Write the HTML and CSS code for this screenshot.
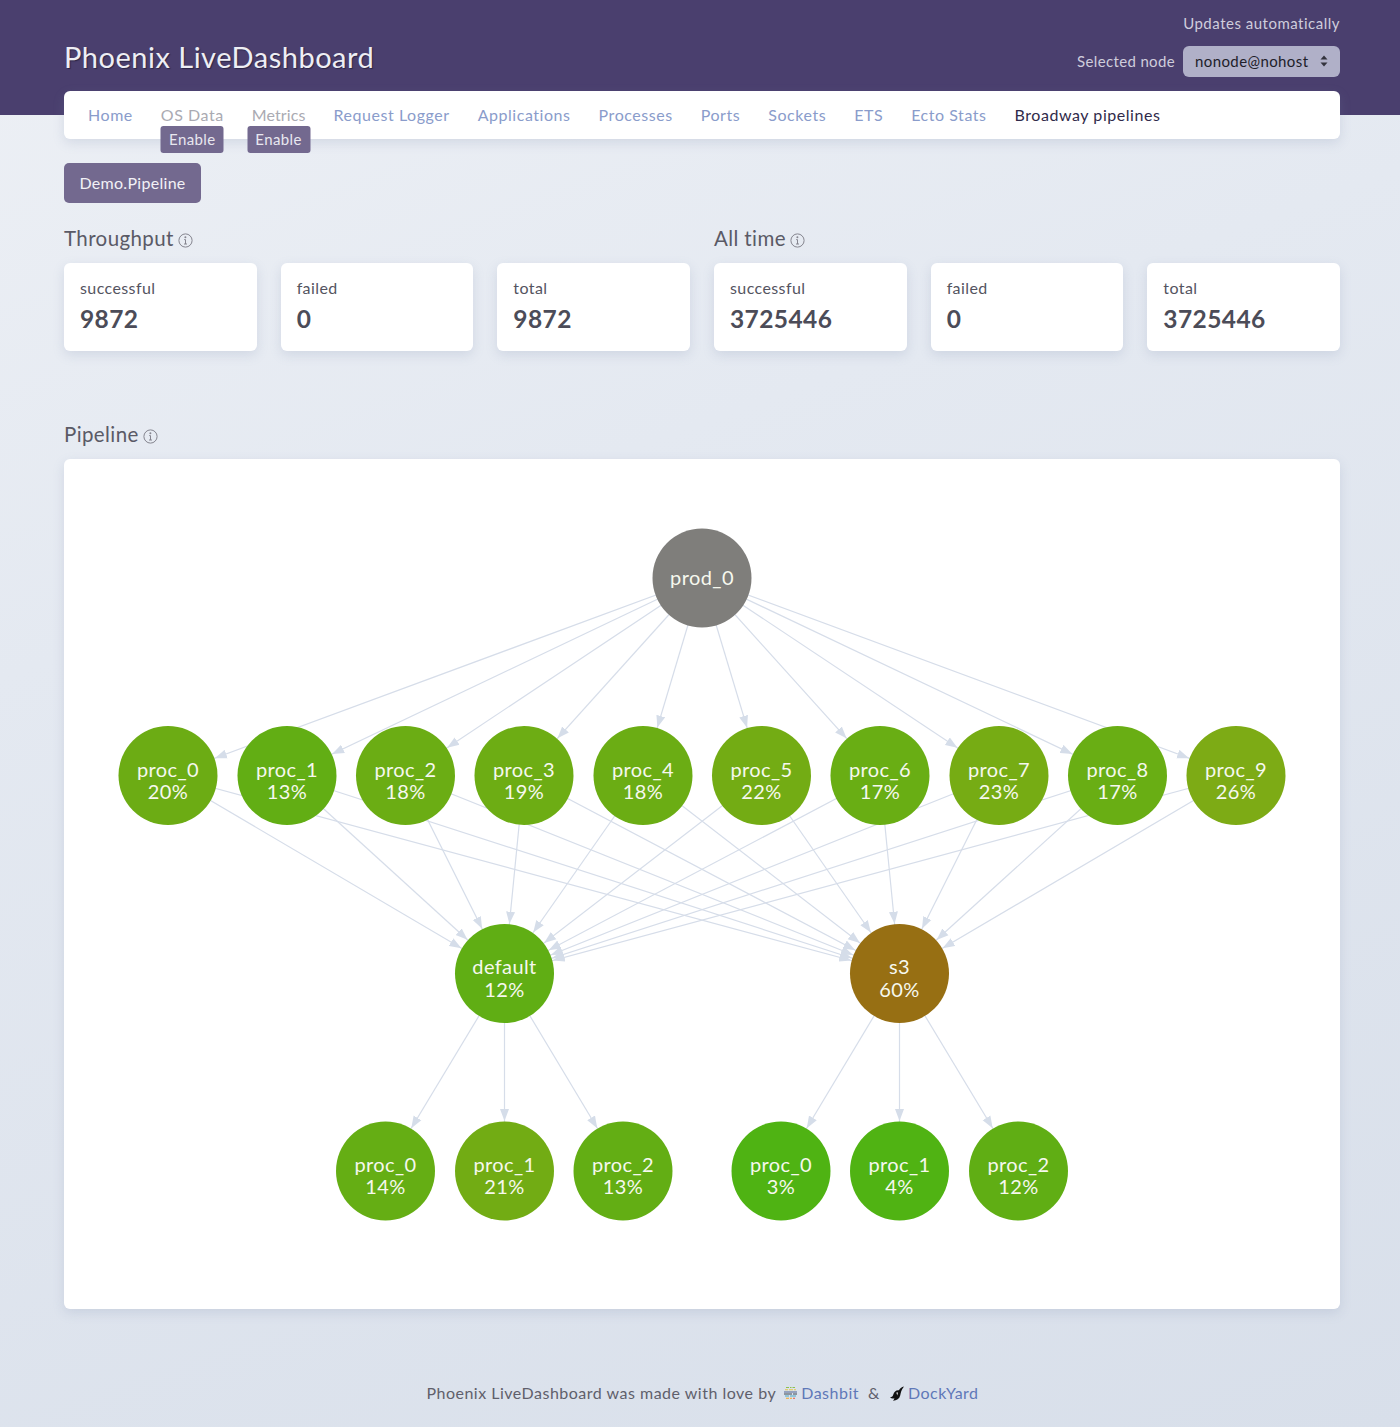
FILE: index.html
```html
<!DOCTYPE html>
<html>
<head>
    <title>Phoenix LiveDashboard</title>
    <link rel="stylesheet" href="styles.css">
</head>
<body>
    <header class="topbar">
        <h1 class="brand">Phoenix LiveDashboard</h1>
        <div class="topbar-right">
            <div class="refresh-note">Updates automatically</div>
            <form class="node-form">
                <label for="node-select">Selected node</label>
                <div class="select-wrap">
                    <select id="node-select"><option>nonode@nohost</option></select>
                    <svg class="select-caret" width="8" height="12" viewBox="0 0 8 12"><path d="M4 0.5 L7.5 4.5 H0.5 Z M4 11.5 L7.5 7.5 H0.5 Z"/></svg>
                </div>
            </form>
        </div>
    </header>

    <nav class="nav-card">
        <a href="#" class="nav-link">Home</a>
        <span class="nav-link nav-disabled">OS Data<a href="#" class="enable-badge">Enable</a></span>
        <span class="nav-link nav-disabled nav-metrics">Metrics<a href="#" class="enable-badge">Enable</a></span>
        <a href="#" class="nav-link">Request Logger</a>
        <a href="#" class="nav-link">Applications</a>
        <a href="#" class="nav-link">Processes</a>
        <a href="#" class="nav-link">Ports</a>
        <a href="#" class="nav-link">Sockets</a>
        <a href="#" class="nav-link">ETS</a>
        <a href="#" class="nav-link">Ecto Stats</a>
        <a href="#" class="nav-link nav-active">Broadway pipelines</a>
    </nav>

    <main class="content">
        <a href="#" class="pipeline-button">Demo.Pipeline</a>

        <section class="stats-grid">
            <h2 class="section-title stats-title-left">Throughput
                <svg class="info-icon" width="15" height="15" viewBox="0 0 15 15"><circle cx="7.5" cy="7.5" r="6.6"/><path d="M7.5 6.6 V11 M6 11 H9 M6.2 6.6 H7.5"/><circle class="info-dot" cx="7.4" cy="4.3" r="1"/></svg>
            </h2>
            <h2 class="section-title stats-title-right">All time
                <svg class="info-icon" width="15" height="15" viewBox="0 0 15 15"><circle cx="7.5" cy="7.5" r="6.6"/><path d="M7.5 6.6 V11 M6 11 H9 M6.2 6.6 H7.5"/><circle class="info-dot" cx="7.4" cy="4.3" r="1"/></svg>
            </h2>
            <div class="stat-card"><div class="stat-label">successful</div><div class="stat-value">9872</div></div>
            <div class="stat-card"><div class="stat-label">failed</div><div class="stat-value">0</div></div>
            <div class="stat-card"><div class="stat-label">total</div><div class="stat-value">9872</div></div>
            <div class="stat-card"><div class="stat-label">successful</div><div class="stat-value">3725446</div></div>
            <div class="stat-card"><div class="stat-label">failed</div><div class="stat-value">0</div></div>
            <div class="stat-card"><div class="stat-label">total</div><div class="stat-value">3725446</div></div>
        </section>

        <h2 class="section-title pipeline-title">Pipeline
            <svg class="info-icon" width="15" height="15" viewBox="0 0 15 15"><circle cx="7.5" cy="7.5" r="6.6"/><path d="M7.5 6.6 V11 M6 11 H9 M6.2 6.6 H7.5"/><circle class="info-dot" cx="7.4" cy="4.3" r="1"/></svg>
        </h2>

        <div class="graph-card">
            <svg class="graph" width="1276" height="850" viewBox="64 459 1276 850">
                <defs>
                    <marker id="arrow" markerUnits="userSpaceOnUse" markerWidth="12" markerHeight="10" refX="62" refY="5" orient="auto">
                        <path class="arrow-head" d="M0 0.5 L12 5 L0 9.5 Z"/>
                    </marker>
                </defs>

                <g class="edges" marker-end="url(#arrow)">
                    <line x1="702" y1="578" x2="168" y2="775.5"/>
                    <line x1="702" y1="578" x2="287" y2="775.5"/>
                    <line x1="702" y1="578" x2="405.5" y2="775.5"/>
                    <line x1="702" y1="578" x2="524" y2="775.5"/>
                    <line x1="702" y1="578" x2="643" y2="775.5"/>
                    <line x1="702" y1="578" x2="761.5" y2="775.5"/>
                    <line x1="702" y1="578" x2="880" y2="775.5"/>
                    <line x1="702" y1="578" x2="999" y2="775.5"/>
                    <line x1="702" y1="578" x2="1117.5" y2="775.5"/>
                    <line x1="702" y1="578" x2="1236" y2="775.5"/>

                    <line x1="168" y1="775.5" x2="504.5" y2="973.5"/>
                    <line x1="287" y1="775.5" x2="504.5" y2="973.5"/>
                    <line x1="405.5" y1="775.5" x2="504.5" y2="973.5"/>
                    <line x1="524" y1="775.5" x2="504.5" y2="973.5"/>
                    <line x1="643" y1="775.5" x2="504.5" y2="973.5"/>
                    <line x1="761.5" y1="775.5" x2="504.5" y2="973.5"/>
                    <line x1="880" y1="775.5" x2="504.5" y2="973.5"/>
                    <line x1="999" y1="775.5" x2="504.5" y2="973.5"/>
                    <line x1="1117.5" y1="775.5" x2="504.5" y2="973.5"/>
                    <line x1="1236" y1="775.5" x2="504.5" y2="973.5"/>

                    <line x1="168" y1="775.5" x2="899.5" y2="973.5"/>
                    <line x1="287" y1="775.5" x2="899.5" y2="973.5"/>
                    <line x1="405.5" y1="775.5" x2="899.5" y2="973.5"/>
                    <line x1="524" y1="775.5" x2="899.5" y2="973.5"/>
                    <line x1="643" y1="775.5" x2="899.5" y2="973.5"/>
                    <line x1="761.5" y1="775.5" x2="899.5" y2="973.5"/>
                    <line x1="880" y1="775.5" x2="899.5" y2="973.5"/>
                    <line x1="999" y1="775.5" x2="899.5" y2="973.5"/>
                    <line x1="1117.5" y1="775.5" x2="899.5" y2="973.5"/>
                    <line x1="1236" y1="775.5" x2="899.5" y2="973.5"/>

                    <line x1="504.5" y1="973.5" x2="385.5" y2="1171"/>
                    <line x1="504.5" y1="973.5" x2="504.5" y2="1171"/>
                    <line x1="504.5" y1="973.5" x2="623" y2="1171"/>
                    <line x1="899.5" y1="973.5" x2="781" y2="1171"/>
                    <line x1="899.5" y1="973.5" x2="899.5" y2="1171"/>
                    <line x1="899.5" y1="973.5" x2="1018.5" y2="1171"/>
                </g>

                <g class="nodes">
                    <circle cx="702" cy="578" r="49.5" fill="#7f7e7b"/>
                    <text x="702" y="584.5">prod_0</text>

                    <circle cx="168" cy="775.5" r="49.5" fill="#6cac14"/>
                    <text x="168" y="776.5">proc_0<tspan x="168" dy="22">20%</tspan></text>
                    <circle cx="287" cy="775.5" r="49.5" fill="#62ae14"/>
                    <text x="287" y="776.5">proc_1<tspan x="287" dy="22">13%</tspan></text>
                    <circle cx="405.5" cy="775.5" r="49.5" fill="#6bad14"/>
                    <text x="405.5" y="776.5">proc_2<tspan x="405.5" dy="22">18%</tspan></text>
                    <circle cx="524" cy="775.5" r="49.5" fill="#6dad14"/>
                    <text x="524" y="776.5">proc_3<tspan x="524" dy="22">19%</tspan></text>
                    <circle cx="643" cy="775.5" r="49.5" fill="#6bad14"/>
                    <text x="643" y="776.5">proc_4<tspan x="643" dy="22">18%</tspan></text>
                    <circle cx="761.5" cy="775.5" r="49.5" fill="#73ac14"/>
                    <text x="761.5" y="776.5">proc_5<tspan x="761.5" dy="22">22%</tspan></text>
                    <circle cx="880" cy="775.5" r="49.5" fill="#69ae14"/>
                    <text x="880" y="776.5">proc_6<tspan x="880" dy="22">17%</tspan></text>
                    <circle cx="999" cy="775.5" r="49.5" fill="#76ac14"/>
                    <text x="999" y="776.5">proc_7<tspan x="999" dy="22">23%</tspan></text>
                    <circle cx="1117.5" cy="775.5" r="49.5" fill="#69ae14"/>
                    <text x="1117.5" y="776.5">proc_8<tspan x="1117.5" dy="22">17%</tspan></text>
                    <circle cx="1236" cy="775.5" r="49.5" fill="#7dab15"/>
                    <text x="1236" y="776.5">proc_9<tspan x="1236" dy="22">26%</tspan></text>

                    <circle cx="504.5" cy="973.5" r="49.5" fill="#60ae14"/>
                    <text x="504.5" y="973.5">default<tspan x="504.5" dy="23">12%</tspan></text>
                    <circle cx="899.5" cy="973.5" r="49.5" fill="#976f13"/>
                    <text x="899.5" y="973.5">s3<tspan x="899.5" dy="23">60%</tspan></text>

                    <circle cx="385.5" cy="1171" r="49.5" fill="#65ae14"/>
                    <text x="385.5" y="1171.5">proc_0<tspan x="385.5" dy="22">14%</tspan></text>
                    <circle cx="504.5" cy="1171" r="49.5" fill="#72ac14"/>
                    <text x="504.5" y="1171.5">proc_1<tspan x="504.5" dy="22">21%</tspan></text>
                    <circle cx="623" cy="1171" r="49.5" fill="#63ae14"/>
                    <text x="623" y="1171.5">proc_2<tspan x="623" dy="22">13%</tspan></text>
                    <circle cx="781" cy="1171" r="49.5" fill="#4fb313"/>
                    <text x="781" y="1171.5">proc_0<tspan x="781" dy="22">3%</tspan></text>
                    <circle cx="899.5" cy="1171" r="49.5" fill="#50b313"/>
                    <text x="899.5" y="1171.5">proc_1<tspan x="899.5" dy="22">4%</tspan></text>
                    <circle cx="1018.5" cy="1171" r="49.5" fill="#60ae14"/>
                    <text x="1018.5" y="1171.5">proc_2<tspan x="1018.5" dy="22">12%</tspan></text>
                </g>
            </svg>
        </div>
    </main>

    <footer class="footer">
        <span>Phoenix LiveDashboard was made with love by</span>
        <a href="#" class="footer-link">
            <svg class="footer-logo" width="15" height="14" viewBox="0 0 15 14">
                <path stroke="#8cc152" d="M3 1.5 H6 M7 1.5 H8.5 M9.5 1.5 H12"/>
                <path stroke="#e6c84a" d="M2 3.8 H5 M6 3.8 H10 M11 3.8 H13"/>
                <path stroke="#5b6f9c" d="M1 6 H14"/>
                <path stroke="#434a54" d="M1 8 H9 M10 8 H14"/>
                <path stroke="#48a9c5" d="M2 10 H6 M7 10 H13"/>
                <path stroke="#f6a623" d="M3 12.2 H6 M7 12.2 H9"/>
                <path stroke="#e9573f" d="M10 12.2 H12"/>
            </svg>Dashbit</a>
        <span class="footer-amp">&amp;</span>
        <a href="#" class="footer-link">
            <svg class="footer-logo" width="16" height="15" viewBox="0 0 16 15">
                <path fill="#111" d="M15 0.5 C12.5 1 10.8 2.6 10 4.2 C7.2 3.8 5 5.6 4.4 8.2 C4 10 3 11 1 11.4 C2.4 12.6 4 12.8 5.4 12.2 C5.2 13 4.8 14 4 14.8 C7.8 14.8 10.4 12.8 11.2 9.6 C11.8 7.2 12.2 3.6 15 0.5 Z"/>
                <path fill="#fff" d="M7.4 6.6 L9 6.4 L8.2 9.4 Z"/>
            </svg>DockYard</a>
    </footer>
</body>
</html>
```

FILE: styles.css
```css
* {
    box-sizing: border-box;
}
html, body {
    margin: 0;
}
body {
    font-family: Lato, "Open Sans", sans-serif;
    font-size: 16px;
    letter-spacing: 0.4px;
    color: #54545f;
    background: linear-gradient(160deg, #edf0f5 0%, #e4e9f1 35%, #d8dfea 100%);
    height: 1427px;
}
a {
    text-decoration: none;
}

.topbar {
    height: 115px;
    background: #4a3f6e;
    padding: 0 60px 0 64px;
    display: flex;
    justify-content: space-between;
    align-items: flex-start;
}
.brand {
    margin: 38px 0 0;
    font-size: 29px;
    line-height: 38px;
    font-weight: 400;
    letter-spacing: 0.5px;
    color: #eeeef4;
    text-shadow: 1px 1px 1px #2b2545;
}
.topbar-right {
    padding-top: 13px;
    text-align: right;
    color: #cfcddc;
    font-size: 15px;
    letter-spacing: 0.5px;
}
.refresh-note {
    line-height: 20px;
}
.node-form {
    margin-top: 13px;
    display: flex;
    align-items: center;
    gap: 8px;
}
.node-form label {
    margin-bottom: 2px;
    letter-spacing: 0.35px;
}
.select-wrap {
    position: relative;
}
.select-wrap select {
    appearance: none;
    display: block;
    width: 157px;
    height: 31px;
    padding: 0 12px 2px;
    border: none;
    border-radius: 6px;
    background: #b0b0c8;
    color: #20202a;
    font-family: inherit;
    font-size: 15px;
    letter-spacing: 0.4px;
}
.select-caret {
    position: absolute;
    right: 12px;
    top: 9px;
    fill: #33333d;
}

.nav-card {
    margin: -24px 60px 0 64px;
    height: 48px;
    padding: 0 24px 2px;
    display: flex;
    align-items: center;
    gap: 28px;
    background: #fff;
    border-radius: 6px;
    box-shadow: 0 4px 12px rgba(120, 135, 170, 0.2);
    position: relative;
    letter-spacing: 0.55px;
}
.nav-link {
    color: #8a9ccb;
    position: relative;
}
.nav-disabled {
    color: #aaaab2;
}
.nav-metrics {
    letter-spacing: 0.1px;
}
.nav-active {
    color: #2f2a4a;
}
.enable-badge {
    position: absolute;
    left: 50%;
    top: 21px;
    transform: translateX(-50%);
    width: 63px;
    height: 27px;
    line-height: 27px;
    text-align: center;
    font-size: 15px;
    letter-spacing: 0.4px;
    color: #e8e7ef;
    background: #73698f;
    border-radius: 3px;
}

.content {
    padding: 24px 60px 0 64px;
}
.pipeline-button {
    display: inline-block;
    width: 137px;
    height: 40px;
    line-height: 40px;
    text-align: center;
    color: #f2f1f6;
    background: #73698f;
    border-radius: 5px;
    letter-spacing: 0.3px;
}
.section-title {
    margin: 0;
    padding-bottom: 2px;
    font-size: 20.5px;
    line-height: 24px;
    font-weight: 400;
    color: #5a5a66;
    display: flex;
    align-items: center;
    gap: 4px;
}
.info-icon {
    fill: none;
    stroke: #85858f;
    stroke-width: 1;
    margin-top: 4px;
}
.info-dot {
    fill: #85858f;
    stroke: none;
}

.stats-grid {
    margin-top: 23px;
    display: grid;
    grid-template-columns: repeat(6, 1fr);
    column-gap: 24px;
    row-gap: 11px;
}
.stats-title-left,
.stats-title-right {
    grid-column: span 3;
}
.stat-card {
    height: 88px;
    padding: 15px 16px;
    background: #fff;
    border-radius: 6px;
    box-shadow: 0 4px 12px rgba(120, 135, 170, 0.2);
}
.stat-label {
    line-height: 20px;
}
.stat-value {
    margin-top: 5px;
    font-size: 24.5px;
    line-height: 32px;
    font-weight: 700;
    color: #4c4c58;
}

.pipeline-title {
    margin-top: 71px;
}
.graph-card {
    margin-top: 11px;
    height: 850px;
    background: #fff;
    border-radius: 6px;
    box-shadow: 0 4px 12px rgba(120, 135, 170, 0.2);
}
.graph {
    display: block;
}
.edges line {
    stroke: #d6dde9;
    stroke-width: 1.2;
}
.arrow-head {
    fill: #d5dde9;
}
.nodes text {
    fill: #f6f8ee;
    font-size: 20px;
    letter-spacing: 0.4px;
    text-anchor: middle;
}

.footer {
    margin-top: 74px;
    padding-left: 5px;
    display: flex;
    justify-content: center;
    align-items: center;
    gap: 7px;
    line-height: 20px;
    letter-spacing: 0.5px;
    color: #5f5f6b;
}
.footer-amp {
    margin: 0 2px;
}
.footer-link {
    display: flex;
    align-items: center;
    gap: 3px;
    color: #5f78b8;
}
.footer-logo {
    stroke-width: 1.1;
    fill: none;
}
```
